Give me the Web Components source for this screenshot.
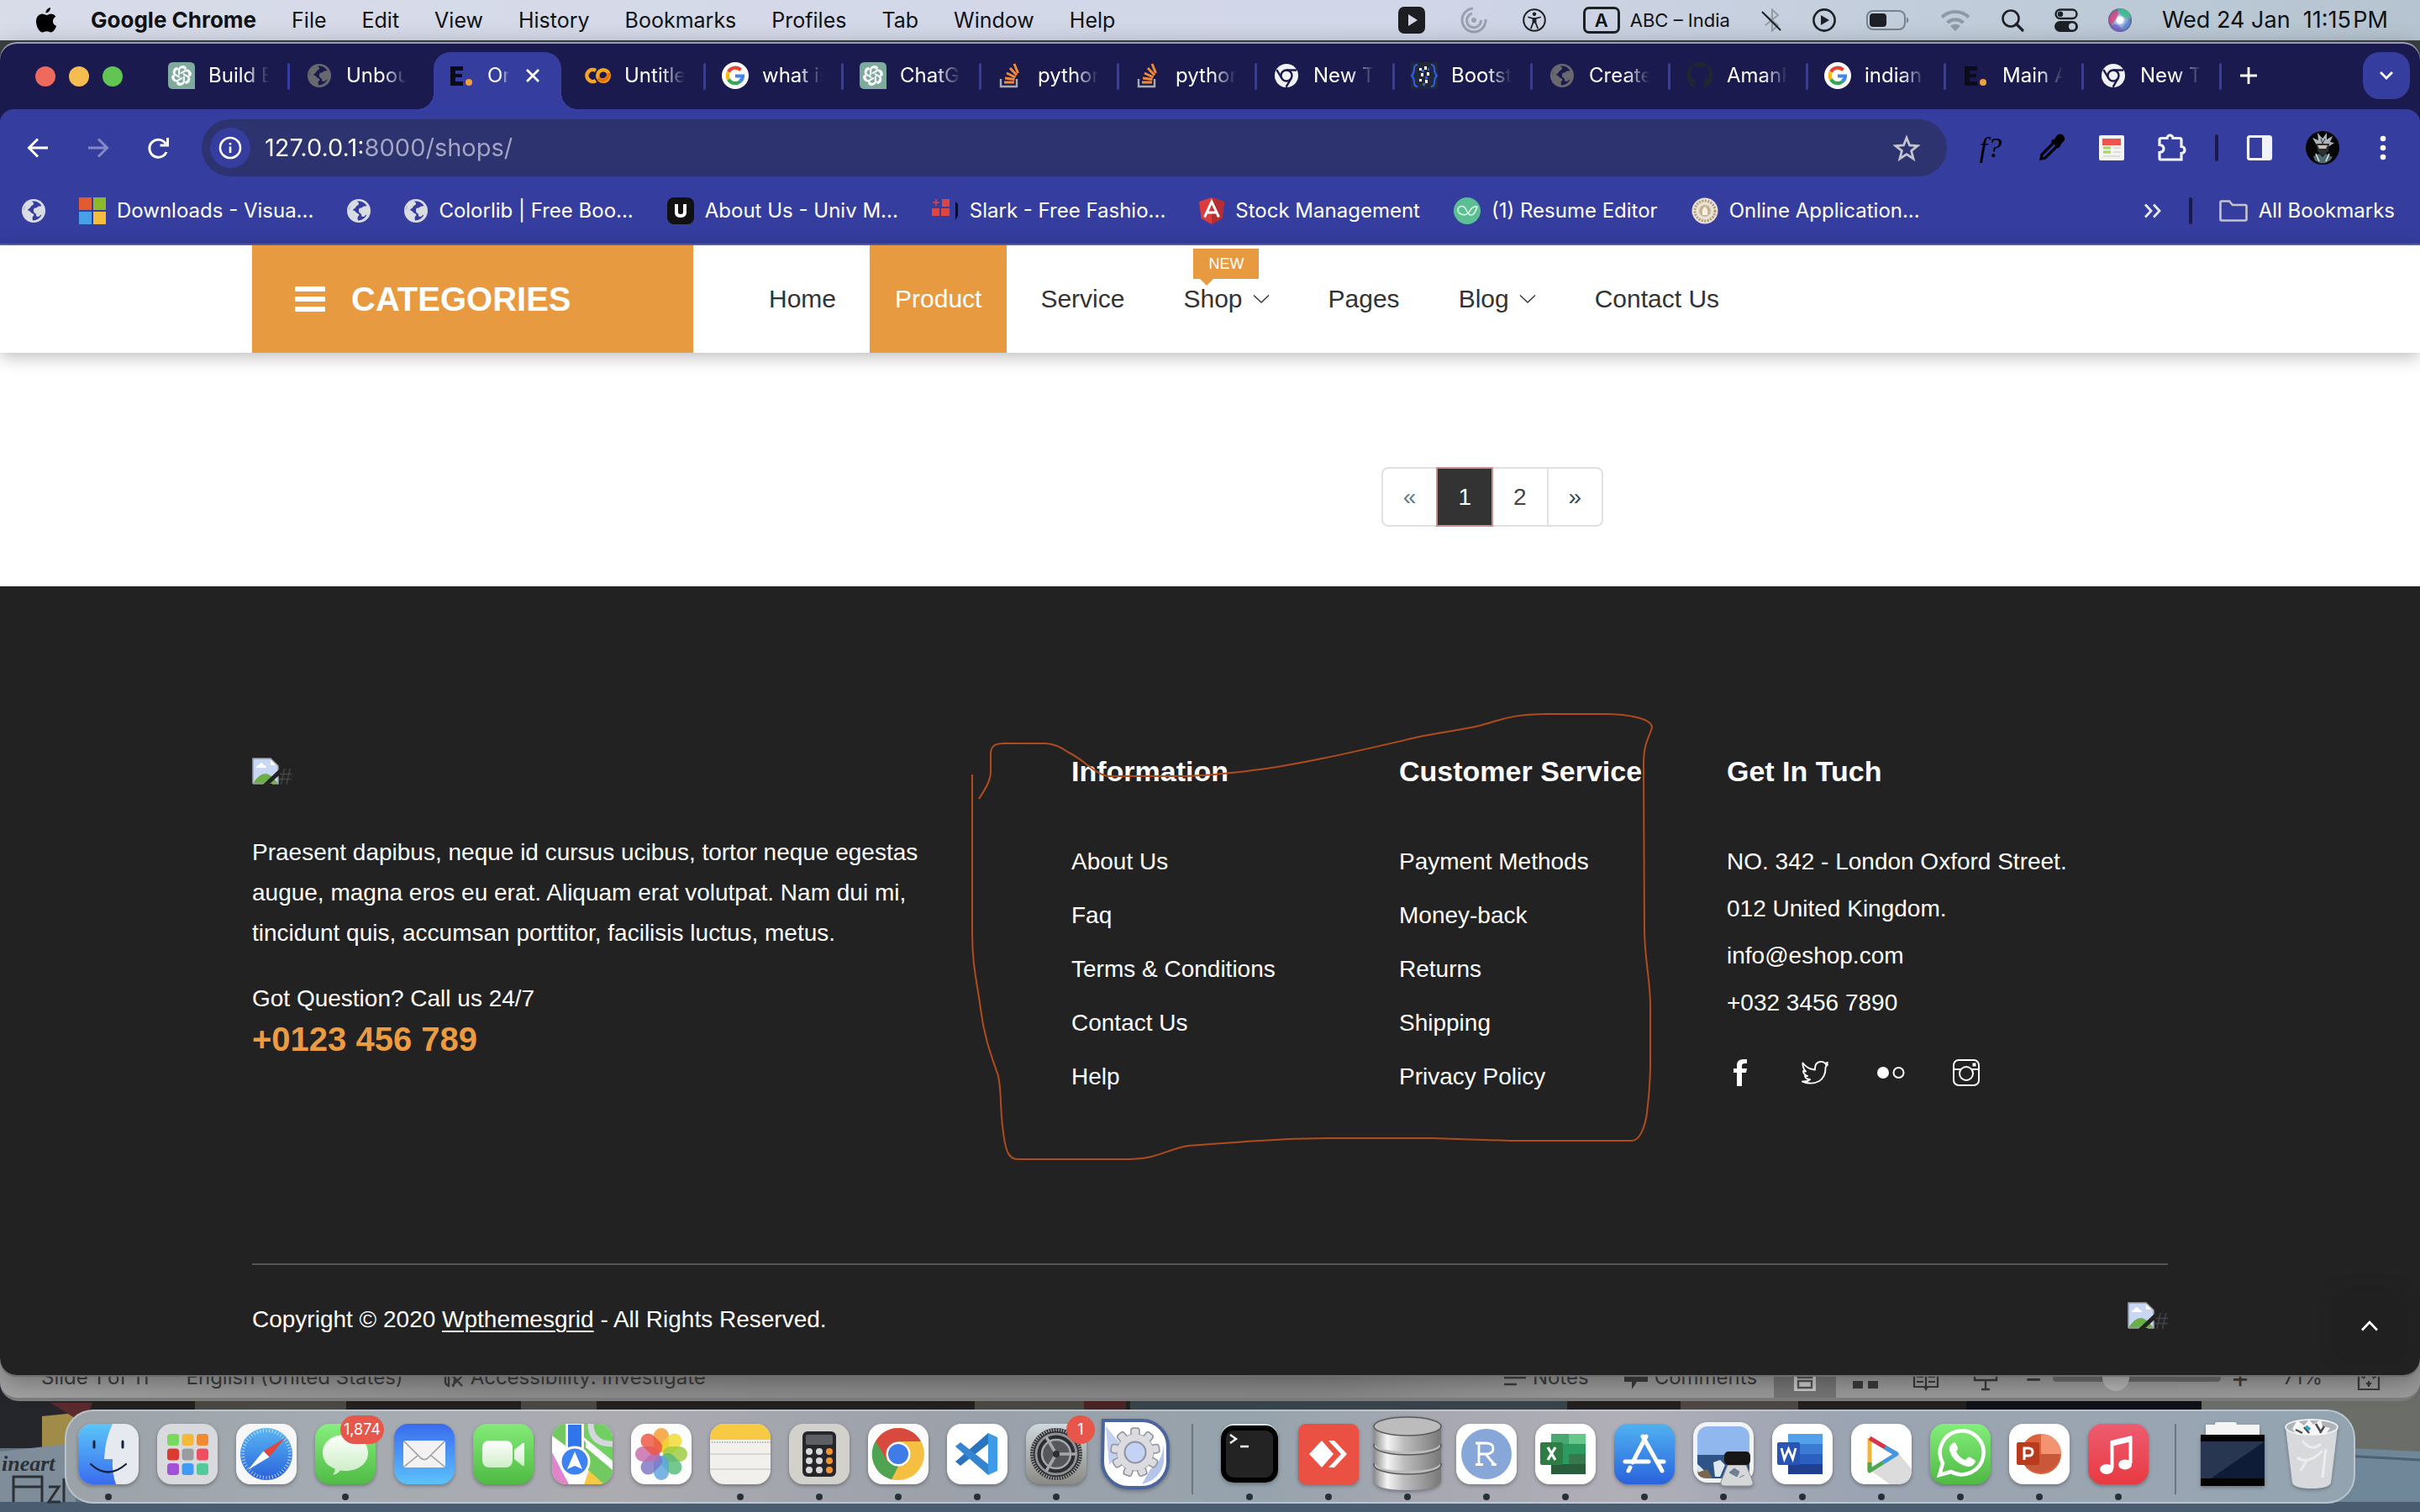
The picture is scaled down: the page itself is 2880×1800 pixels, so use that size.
<!DOCTYPE html>
<html lang="en">
<head>
<meta charset="utf-8">
<title>Eshop</title>
<style>
html,body{margin:0;height:100%}
body{font-family:Inter,"Liberation Sans",sans-serif;overflow:hidden}
</style>
</head>
<body>
<mac-desktop></mac-desktop>
<script>
const define=(name,css,html)=>customElements.define(name,class extends HTMLElement{
  constructor(){
    super();
    const t=document.createElement('template');
    const markup=typeof html==='function'?'':html;
    t.innerHTML=`<style>*{box-sizing:border-box}a{color:inherit;text-decoration:none}button{font:inherit;color:inherit;background:none;border:0;padding:0;margin:0;display:flex;align-items:center;justify-content:center}ul{list-style:none;margin:0;padding:0}${css}</style>${markup}`;
    this.attachShadow({mode:'open'}).append(t.content.cloneNode(true));
  }
  connectedCallback(){
    if(typeof html==='function'&&!this.ready){this.ready=true;this.shadowRoot.innerHTML+=html(this)}
  }
});

const globe='<circle cx="14" cy="14" r="14" fill="currentColor"/><path d="M14 2.500c4 0 7.500 2 9.500 5.500-2 1-4 0-5 1.500s-4 .5-4.500 2.500 3 2 4.500 3 1 3.500 3 4 2-1 2.500-1.500A11.500 11.500 0 0 1 13 25.500c0-2-1-3 0-4.500s2-1.500 1-3-3-1-4-3-3.500-1.500-5-2.500c-1.500-.8-2.500 0-2.500 0C3 7 8 2.500 14 2.500z" fill="var(--cut)"/><path d="M9 2.500c3 0 5 1 5 3s-3 2-3.500 4-3 1.500-3.500 3.500-3 1-4-1C3 8 5 4 9 2.500z" fill="currentColor"/><path d="M15 12c3-1.500 6-1 10-2v7c-3 0-3 4-6 4s-1-3-3-4-3-3-1-5z" fill="currentColor"/>';
const knot='<g fill="none" stroke="#fff" stroke-width="1.700">'+[0,60,120,180,240,300].map(a=>`<path transform="rotate(${a} 16 16)" d="M13 15.500v-6.500a4.500 4.500 0 0 1 8.500-1.500M16 13l5.500-3.200a4.500 4.500 0 0 1 3 7"/>`).join('')+'</g>';
const googleG='<circle cx="16" cy="16" r="16" fill="#fff"/><g fill="none" stroke-width="4.200"><path d="M8 11.500a9 9 0 0 1 14.500-2" stroke="#ea4335"/><path d="M8 20.500a9.500 9.500 0 0 1 0-9" stroke="#fbbc05"/><path d="M8 20.500a9 9 0 0 0 14 2.200" stroke="#34a853"/><path d="M16 16.500h9a9 9 0 0 1-3.200 6.300" stroke="#4285f4"/></g>';
const newtab='<circle cx="14" cy="14" r="14" fill="#f1f3f8"/><circle cx="14" cy="14" r="6.500" fill="none" stroke="#1b1a4e" stroke-width="2.400"/><path d="M14 7.500h12M8.400 17.200l-6-10M19.600 17.200l-6 10.500" stroke="#1b1a4e" stroke-width="2.400" fill="none"/>';
const eicon='<path d="M1 1h15v5H7v4h8v4H7v5h9v5H1z" fill="#0c0c18"/><circle cx="23" cy="20" r="4" fill="#f2a03c"/>';
const overflow='<g fill="none" stroke="#f08a3a" stroke-width="3"><path d="M6 24h12M7 19l11.500 1.500M9 13l10.500 5M13 7l8 8.500M18 2l4.500 11"/></g><path d="M2 20v9h19v-9" fill="none" stroke="#a9abb0" stroke-width="2.400"/>';
const tile=(fill,inner)=>`<rect width="72" height="72" rx="17" fill="${fill}"/>${inner}`;
const grad=(id,a,b)=>`<linearGradient id="${id}" x1="0" y1="0" x2="0" y2="1"><stop offset="0" stop-color="${a}"/><stop offset="1" stop-color="${b}"/></linearGradient>`;
const spokes=(n,r1,r2,c,w)=>Array.from({length:n},(_,i)=>`<path transform="rotate(${i*360/n} 36 36)" d="M36 ${36-r1}V${36-r2}" stroke="${c}" stroke-width="${w}"/>`).join('');
const ICONS={
apple:['0 0 26 32','<path d="M18 1c.3 3-2.500 6.500-5.500 6.500C12.200 4.500 15 1.300 18 1zM18.500 8.500c2.300 0 4.500 1.200 5.800 3.200-5 3-4.200 9.300.8 11.300-1.300 3.500-3.700 7.500-6.300 7.500-2 0-2.700-1.200-5.100-1.200s-3.200 1.200-5.100 1.200C4.800 30.500 1 23.500 1 17.500c0-5.500 3.500-9 7.200-9 2.200 0 4 1.400 5.400 1.400 1.300 0 3-1.400 4.900-1.400z" fill="#000"/>'],
playbox:['0 0 32 32','<rect width="32" height="32" rx="7" fill="#1c1e21"/><path d="M12 9l11 7-11 7z" fill="#d5dae6"/>'],
spiral:['0 0 32 32','<g fill="none" stroke="#9ba1ae" stroke-width="3"><path d="M15 2A14 14 0 1 0 30 15"/><path d="M14 8a8.500 8.500 0 1 0 10.500 8"/></g><circle cx="16" cy="16" r="3" fill="#9ba1ae"/>'],
access:['0 0 28 28','<circle cx="14" cy="14" r="12.800" fill="none" stroke="#1d2126" stroke-width="2"/><circle cx="14" cy="6.800" r="2.200" fill="#1d2126"/><path d="M7 10.500l5 1.300h4l5-1.300M12.500 12v5L10 23.500M15.500 12v5l2.500 6.500" fill="none" stroke="#1d2126" stroke-width="1.800" stroke-linecap="round"/><path d="M12 11.500h4v6h-4z" fill="#1d2126"/>'],
bt:['0 0 26 28','<path d="M6 8l15 12-7 6.500V1.500L21 8 6 20" fill="none" stroke="#929ba6" stroke-width="2"/><path d="M2 4l22 22" stroke="#1d2126" stroke-width="2.200"/>'],
playcirc:['0 0 28 28','<circle cx="14" cy="14" r="12.600" fill="none" stroke="#1d2126" stroke-width="2.600"/><path d="M10 8l10 6-10 6z" fill="#1d2126"/>'],
battery:['0 0 52 24','<rect x="1" y="1" width="45" height="22" rx="7" fill="none" stroke="#78828c" stroke-width="2"/><rect x="4" y="4" width="20" height="16" rx="4" fill="#1d2126"/><path d="M48 8.500c3 1 3 6 0 7z" fill="#78828c"/>'],
wifi:['0 0 36 26','<g fill="none" stroke="#8f9aa5" stroke-width="4.200"><path d="M2 9.500a23 23 0 0 1 32 0"/><path d="M8.500 16a14 14 0 0 1 19 0"/></g><path d="M18 26l-6-6a9 9 0 0 1 12 0z" fill="#8f9aa5"/>'],
search:['0 0 28 28','<circle cx="12" cy="12" r="9.500" fill="none" stroke="#1d2126" stroke-width="2.600"/><path d="M18.500 18.500L26 26" stroke="#1d2126" stroke-width="3.200" stroke-linecap="round"/>'],
cc:['0 0 28 28','<rect x="1.500" y="1.500" width="25" height="10.500" rx="5.200" fill="none" stroke="#1d2126" stroke-width="2.400"/><circle cx="7" cy="6.800" r="3.200" fill="#1d2126"/><rect x="0" y="15" width="28" height="13" rx="6.500" fill="#1d2126"/><circle cx="21" cy="21.500" r="4" fill="#c2cedb"/>'],
siri:['0 0 28 28','<defs><radialGradient id="a"><stop offset="0" stop-color="#fff"/><stop offset=".35" stop-color="#a9c8f5"/><stop offset="1" stop-color="#5a5f8c"/></radialGradient></defs><circle cx="14" cy="14" r="14" fill="url(#a)"/><path d="M1 14C1 7 7 2 12 4c-1 6-3 11-9 15q-2-3-2-5z" fill="#d8487f" opacity=".85"/><path d="M11 1c9-3 16 4 16 11-6 1-12-3-16-11z" fill="#3fbf8f" opacity=".9"/><path d="M4 21c5-4 9-2 13 6-5 2-10 0-13-6z" fill="#7c5ad0" opacity=".7"/><path d="M26 14q0 8-8 12-3-6 8-12z" fill="#5a8fe0" opacity=".8"/><circle cx="14" cy="14" r="4.500" fill="#fff" opacity=".9"/>'],
gpt:['0 0 32 32','<path d="M6 0h20q6 0 6 6v26H6q-6 0-6-6V6q0-6 6-6z" fill="#7fab9e"/>'+knot],
globeD:['0 0 28 28','<g style="color:#68696f;--cut:#1b1a4e">'+globe+'</g>'],
globeL:['0 0 28 28','<g style="color:#dadce4;--cut:#353e9f">'+globe+'</g>'],
eicon:['0 0 28 25',eicon],
colab:['0 0 32 32','<g fill="none" stroke-width="4.500"><path d="M14 10a7 7 0 1 0 0 12" stroke="#f5a623"/><circle cx="23" cy="16" r="6.800" stroke="#f5a623"/><path d="M17 19a7 7 0 0 0 12-6" stroke="#e8710a"/></g>'],
google:['0 0 32 32',googleG],
so:['0 0 28 32',overflow],
newtab:['0 0 28 28',newtab],
boots:['0 0 32 32','<rect width="32" height="32" fill="#20283a"/><path d="M8 3q-4 0-4 5t-3 8q3 3 3 8t4 5M24 3q4 0 4 5t3 8q-3 3-3 8t-4 5" fill="none" stroke="#2f5ef0" stroke-width="2"/><path d="M10 7h3v3h-3zM16 5h3v4h-3zM12 13h3v4h-3zM19 12h3v4h-3zM10 20h3v3h-3zM17 21h3v4h-3z" fill="#fff"/><path d="M13 9h3v3h-3zM17 17h3v3h-3zM14 25h3v3h-3zM20 7h2v3h-2z" fill="#2f5ef0"/>'],
github:['0 0 32 32','<path d="M16 0a16 16 0 0 0-5 31v-5c-4 1-5-2-6-3.500 2 0 2.500 2.500 6 1.500 0-1.500.5-2 1-2.500-5-1-7-3-7-8 0-2 .6-3.500 1.700-4.700C6 7 6.200 5.500 7 4.500c2 0 3.500 1 4.700 1.700a16 16 0 0 1 8.600 0C21.500 5.500 23 4.500 25 4.500c.8 1 1 2.500.3 4.300C26.400 10 27 11.500 27 13.500c0 5-2 7-7 8 1 1 1 2 1 3V31A16 16 0 0 0 16 0z" fill="#22272e"/>'],
back:['0 0 26 24','<path d="M13 1.500L2.500 12 13 22.500M3 12h22" fill="none" stroke="currentColor" stroke-width="3"/>'],
fwd:['0 0 26 24','<path d="M13 1.500L23.500 12 13 22.500M23 12H1" fill="none" stroke="currentColor" stroke-width="3"/>'],
reload:['0 0 26 26','<path d="M22 18a10.500 10.500 0 1 1-.5-9.500" fill="none" stroke="#fff" stroke-width="3"/><path d="M25 1v10.500H14.500v-3H22V1z" fill="#fff"/>'],
info:['0 0 28 28','<circle cx="14" cy="14" r="12" fill="none" stroke="#fff" stroke-width="2.600"/><path d="M14 12.500V20M14 8v2.600" stroke="#fff" stroke-width="2.600"/>'],
star:['0 0 34 32','<path d="M17 4l3.500 9 9.500.6-7.400 6 2.500 9.400L17 23.700 8.900 29l2.500-9.400-7.400-6 9.500-.6z" fill="none" stroke="#c3c4cf" stroke-width="2.800"/>'],
dropper:['0 0 32 32','<path d="M22 1a5 5 0 0 1 8 1q3 4-1 7l-4 5-7-7z" fill="#000"/><path d="M16 7l9 8" stroke="#000" stroke-width="4"/><path d="M18 10L4 24l-1 5 5-1 14-14" fill="none" stroke="#000" stroke-width="3.200"/>'],
card:['0 0 30 30','<rect width="30" height="30" rx="2" fill="#f3f3ef"/><rect x="4" y="4" width="22" height="8" fill="#ef5350"/><path d="M5 15h9M5 20h9" stroke="#a4d65e" stroke-width="3"/><path d="M17 15h9M17 20h9M5 25h20" stroke="#ddd" stroke-width="2"/>'],
puzzle:['0 0 34 34','<path d="M11 5.500a3.500 3.500 0 0 1 7 0h8q2 0 2 2v8a4 4 0 0 1 0 8v7.500H3q-1 0-1-2v-6.500q5-.5 5-4.500t-5-4.500V7.500q0-2 2-2z" fill="none" stroke="#f1f3fa" stroke-width="3.200"/>'],
panel:['0 0 30 30','<rect x="1.500" y="1.500" width="27" height="27" rx="2" fill="none" stroke="#f1f3fa" stroke-width="3.200"/><path d="M18 2h10v26H18z" fill="#f1f3fa"/>'],
avatar:['0 0 40 40','<circle cx="20" cy="20" r="20" fill="#060606"/><path d="M12 15L8 8l7 3-1-9 6 7 5-7 0 8 7-4-3 7 5 1-6 4H14z" fill="#aeb2ba"/><path d="M13 15h15l-1 9-7 6-6-6z" fill="#2c2f34"/><path d="M14 17h12l-2 4h-8z" fill="#cdbfb2"/><path d="M9 30l7-3 4 4 4-4 8 4-3 4q-9 7-18 0z" fill="#4f6b70"/><path d="M18 9l2 6 3-6" stroke="#333" fill="none"/><path d="M12 27l4 9M28 27l-4 9" stroke="#dfe8e8" stroke-width="1.500" fill="none"/>'],
dots:['0 0 8 30','<circle cx="4" cy="4" r="3.300" fill="#fff"/><circle cx="4" cy="15" r="3.300" fill="#fff"/><circle cx="4" cy="26" r="3.300" fill="#fff"/>'],
ms:['0 0 32 32','<path d="M0 0h15v15H0z" fill="#e25a2f"/><path d="M17 0h15v15H17z" fill="#8cb82b"/><path d="M0 17h15v15H0z" fill="#48a0e8"/><path d="M17 17h15v15H17z" fill="#f6bd3d"/>'],
univ:['0 0 32 32','<rect width="32" height="32" rx="8" fill="#111"/><path d="M11 8v9.500q0 4.500 5 4.500t5-4.500V8" fill="none" stroke="#fff" stroke-width="4"/>'],
slark:['0 0 32 32','<path d="M12 2h9v9h-9zM0 13h9v9H0zM11 13h10v9H11z" fill="#e0443e"/><path d="M5 2v8M1 6h8" stroke="#e0443e" stroke-width="1.600"/><path d="M28 5l3 3v14l-3 5z" fill="#0a0a14"/>'],
angular:['0 0 30 32','<path d="M15 0l15 5-2.500 20L15 32 2.500 25 0 5z" fill="#dd3b3a"/><path d="M15 0l15 5-2.500 20L15 32z" fill="#b52e31"/><path d="M6.500 23.500L15 5l8.500 18.500M9.500 18h11" fill="none" stroke="#fff" stroke-width="3"/>'],
resume:['0 0 32 32','<circle cx="16" cy="16" r="16" fill="#5cbf93"/><path d="M28 11q-5-1-8 4t-6 5.500q-3 .5-5-.5-4-1.500-4-5t4-4.500q4-.5 6 4.500t5 6q3 .5 5-3t3-7z" fill="none" stroke="#d8f5e6" stroke-width="1.600"/>'],
seal:['0 0 32 32','<circle cx="16" cy="16" r="15.500" fill="#e9e2d6"/><circle cx="16" cy="16" r="12" fill="none" stroke="#b29a77" stroke-width="3" stroke-dasharray="2 1.500"/><circle cx="16" cy="16" r="7" fill="#c8b391"/><path d="M13 21q-1-8 3-10 4 2 3 10z" fill="#f7f2e8"/>'],
more:['0 0 22 18','<path d="M2 1.500L9 9l-7 7.500M12 1.500L19 9l-7 7.500" fill="none" stroke="#e8e9f2" stroke-width="2.800"/>'],
folder:['0 0 34 26','<path d="M1.500 3q0-1.500 1.500-1.500h9l4 4.500h15q1.500 0 1.500 1.500V23q0 1.500-1.500 1.500H3q-1.500 0-1.500-1.500z" fill="none" stroke="#c6c4c9" stroke-width="2.600"/>'],
plus:['0 0 22 22','<path d="M11 1v20M1 11h20" stroke="#fff" stroke-width="2.800"/>'],
cross:['0 0 18 18','<path d="M2 2l14 14M16 2L2 16" stroke="#fff" stroke-width="2.800"/>'],
caret:['0 0 18 12','<path d="M2 2l7 7 7-7" fill="none" stroke="#fff" stroke-width="2.800"/>'],
burger:['0 0 38 32','<rect x="1" y="1" width="36" height="6" rx="1" fill="#fff"/><rect x="1" y="13" width="36" height="6" rx="1" fill="#fff"/><rect x="1" y="25" width="36" height="6" rx="1" fill="#fff"/>'],
chev:['0 0 20 12','<path d="M1 1.500l9 8.500 9-8.500" fill="none" stroke="#333" stroke-width="1.400"/>'],
up:['0 0 22 14','<path d="M2 12.500L11 3l9 9.500" fill="none" stroke="#fff" stroke-width="2.600"/>'],
broken:['0 0 32 32','<path d="M1 1h21l9 9v21H1z" fill="#c9d7f5"/><path d="M1 31q7-12 15-12 6 0 15 12z" fill="#6cae48"/><path d="M5 12q0-3 3-3 3-6 6 0 3 0 3 3z" fill="#fff"/><path d="M22 1v8h9z" fill="#fff"/><path d="M1 31V1h21l9 9v6" fill="none" stroke="#9aa0a8" stroke-width="1.600"/><path d="M1 31h13M24 31h7v-9" fill="none" stroke="#9aa0a8" stroke-width="1.600"/><path d="M32 14v7L20 32h-7z" fill="#222"/>'],
fb:['0 0 32 32','<path d="M12 32V16H8v-5h4V7q0-7 8-7h4v5h-3q-3 0-3 3v3h6l-1 5h-5v16z" fill="#fff"/>'],
tw:['0 0 32 32','<path d="M1.500 4.500q6 7.500 14.500 8Q15.500 4 22 3q4-.5 6 2l3-1-2 3 2-.5-2.500 3Q29 21 21 26q-9 5-20 .5 6 .5 9-2.500-5 0-6-4h3q-5-2-5-6l3 .500q-4-4-3.500-10z" fill="none" stroke="#fff" stroke-width="1.900" stroke-linejoin="round"/>'],
flickr:['0 0 34 32','<circle cx="8" cy="16" r="7" fill="#fff"/><circle cx="26.500" cy="16" r="6" fill="none" stroke="#fff" stroke-width="2"/>'],
insta:['0 0 32 32','<rect x="1" y="1" width="30" height="30" rx="6" fill="none" stroke="#fff" stroke-width="2"/><circle cx="16" cy="17" r="8" fill="none" stroke="#fff" stroke-width="2"/><path d="M1 12h8M23 12h8" stroke="#fff" stroke-width="2"/><path d="M23.500 4.500h4v4h-4z" fill="#fff"/>'],
notesi:['0 0 26 26','<path d="M0 5h26M0 13h26M0 21h15" stroke="#3b3b3b" stroke-width="2.600"/>'],
comi:['0 0 28 30','<path d="M0 3h28v17H15l-6 9v-9H0z" fill="#3b3b3b"/>'],
acci:['0 0 28 28','<path d="M2 12q5-2 4 4t4 8V12M13 12q5 0 4 7l-2 6M14 24l12-12M15 12l11 12" fill="none" stroke="#3f3f3f" stroke-width="2.400"/>'],
v1:['0 0 28 34','<path d="M1 1h26v32H1z" fill="#c9c9c9"/><path d="M6 4h16v13H6zM6 21h16v8H6z" fill="#c9c9c9" stroke="#555" stroke-width="2.400"/>'],
v2:['0 0 30 32','<path d="M0 2h12v9H0zM18 2h12v9H18zM0 20h12v9H0zM18 20h12v9H18z" fill="#3b3b3b"/>'],
v3:['0 0 30 34','<path d="M1 4h12l2 2 2-2h12v24H17l-2 3-2-3H1zM15 6v24M4 10h8M4 16h8M4 22h8M18 10h8M18 16h8M18 22h8" fill="none" stroke="#3b3b3b" stroke-width="2.200"/>'],
v4:['0 0 28 34','<path d="M1 4h26v16H1zM14 20v10M9 31h10" fill="none" stroke="#3b3b3b" stroke-width="2.400"/>'],
fit:['0 0 26 34','<path d="M1 3h24v28H1zM13 6v7M13 21v7M4 16h5M17 16h5" fill="none" stroke="#3b3b3b" stroke-width="2.200"/><path d="M9 23h8l-4 5zM4 16l4-3v6zM22 16l-4-3v6z" fill="#3b3b3b"/>'],
finder:['0 0 72 72',`<defs>${grad('a','#5ac5f8','#3a6cf0')}<clipPath id="c"><rect width="72" height="72" rx="17"/></clipPath></defs><g clip-path="url(#c)"><rect width="72" height="72" fill="#e6e9f0"/><path d="M0 0h41Q32 18 31 42h10q-1 16 4 30H0z" fill="url(#a)"/></g><path d="M19 21v7M53 21v7" stroke="#16213a" stroke-width="3" stroke-linecap="round"/><path d="M15 48q20 19 42 0" fill="none" stroke="#16213a" stroke-width="2.200" stroke-linecap="round"/>`],
launch:['0 0 72 72',tile('#d8dadd',['#79d85e','#f5b93a','#ee8b30','#dd3b31','#9a9ca2','#ee4e5e','#a251d8','#3f9bf5','#54c99a'].map((c,i)=>`<rect x="${12+i%3*17.500}" y="${12+(i/3|0)*17.500}" width="14" height="14" rx="3.500" fill="${c}"/>`).join(''))],
safari:['0 0 72 72',`<defs>${grad('a','#58b6f3','#2a62dc')}</defs>`+tile('#f7f7f7',`<circle cx="36" cy="36" r="31" fill="url(#a)"/>${spokes(48,30,26,'#dcecff',.8)}<path d="M58 17L39.500 39.500l-7-7z" fill="#e5453b"/><path d="M14 55l18.500-22.500 7 7z" fill="#fff"/>`)],
messages:['0 0 72 72',`<defs>${grad('a','#86ef7d','#50bb45')}${grad('b','#fdfffd','#c9ecc3')}</defs>`+tile('url(#a)','<path d="M36 13c16 0 27 9 27 21.500S52 56 36 56q-3 0-6-.5-4 5-9 5 3-3 2.500-7C14 50 9 43 9 34.500 9 22 20 13 36 13z" fill="url(#b)"/>')],
mail:['0 0 72 72',`<defs>${grad('a','#3a6bee','#5cc2fa')}</defs>`+tile('url(#a)','<rect x="11" y="20" width="50" height="32" rx="3" fill="#f2f2f3"/><path d="M12 21l20 20q4 3 8 0l20-20M12 51l17-14M60 51L43 37" fill="none" stroke="#9d9da2" stroke-width="1.600"/>')],
facetime:['0 0 72 72',`<defs>${grad('a','#84ea78','#4fbb43')}${grad('b','#fff','#cdeec7')}</defs>`+tile('url(#a)','<rect x="11" y="20" width="36" height="32" rx="8" fill="url(#b)"/><path d="M49 31l10-8q2-1 2 2v23q0 3-2 2l-10-8z" fill="url(#b)"/>')],
maps:['0 0 72 72','<defs><clipPath id="c"><rect width="72" height="72" rx="17"/></clipPath></defs><g clip-path="url(#c)"><rect width="72" height="72" fill="#f3f3f3"/><path d="M0 0h16v26L0 14z" fill="#72c95f"/><path d="M38 0h34v44L38 16z" fill="#72cf62"/><path d="M46 0q0 24 26 24" fill="none" stroke="#d5d6dd" stroke-width="7"/><path d="M38 20l34 32v20H58L38 50z" fill="#72c95f"/><path d="M0 32l22 40H0z" fill="#e184c9"/><path d="M0 16l18 12v10L40 54v18H20L0 34z" fill="#fff"/><path d="M40 20l32 28v7L40 28z" fill="#fff"/><path d="M44 56l18 16H38z" fill="#f6c944"/><path d="M18 0h18v40H18z" fill="#2f76ea" stroke="#fff" stroke-width="2"/></g><circle cx="27" cy="45" r="17" fill="#3c82f2" stroke="#fff" stroke-width="3"/><path d="M27 33l9 21-9-4-9 4z" fill="#fff"/>'],
photos:['0 0 72 72',tile('#fdfdfd',['#f39a2c','#f0d92e','#9bcb3c','#58b978','#5aa5df','#7d75c4','#c56aa9','#ec5440'].map((c,i)=>`<rect transform="rotate(${i*45} 36 36)" x="27" y="5" width="18" height="29" rx="9" fill="${c}" opacity=".82"/>`).join(''))],
notes:['0 0 72 72','<defs><clipPath id="c"><rect width="72" height="72" rx="17"/></clipPath></defs><g clip-path="url(#c)"><rect width="72" height="72" fill="#f1f0ec"/><rect width="72" height="19" fill="#f8ca43"/><path d="M0 36h72M0 54h72" stroke="#cfcec8" stroke-width="1.500"/><path d="M2 22h70" stroke="#a9a59a" stroke-width="1.500" stroke-dasharray="1.500 1.500"/></g>'],
calc:['0 0 72 72',tile('#d2d1cc','<rect x="16" y="9" width="40" height="54" rx="6" fill="#26272b"/><rect x="20" y="13" width="32" height="12" rx="2" fill="#5d5f64"/>'+[0,1,2].map(r=>[0,1,2].map(k=>`<circle cx="${24+k*12}" cy="${33+r*11}" r="4" fill="${k==2?'#f09433':'#d9d9d9'}"/>`).join('')).join(''))],
chrome:['0 0 72 72',tile('#fcfcfc','<circle cx="36" cy="36" r="31" fill="#f5bf42"/><path d="M36 5A31 31 0 0 1 63 21H36L22 44 9 21A31 31 0 0 1 36 5z" fill="#d84a3d"/><path d="M9 20.500l13.500 23L36 51l-7 15.500A31 31 0 0 1 9 20.500z" fill="#4fa452"/><path d="M36 67l13-23-13 7-8 15q4 1 8 1z" fill="#f5bf42"/><circle cx="36" cy="36" r="14.500" fill="#fff"/><circle cx="36" cy="36" r="12" fill="#3f7ce8"/>')],
vscode:['0 0 72 72',tile('#fff','<path d="M49 11l11 5v40l-11 5z" fill="#3e9be8"/><path d="M49 11v13L16 50l-6-5z" fill="#2a73c0"/><path d="M49 61V48L16 22l-6 5z" fill="#3484d0"/>')],
settings:['0 0 72 72',`<defs>${grad('a','#cfd8dd','#8c8a85')}</defs>`+tile('url(#a)',`<circle cx="36" cy="36" r="31" fill="#2c2d30"/>${spokes(60,31,27,'#a3a5a8',1.4)}<circle cx="36" cy="36" r="24" fill="none" stroke="#8f9194" stroke-width="3"/><circle cx="36" cy="36" r="17" fill="#55575b"/><circle cx="36" cy="36" r="17" fill="none" stroke="#a5a7aa" stroke-width="2.500"/><path d="M36 36H60M36 36L24 15.500M36 36L24 56.500" stroke="#a5a7aa" stroke-width="3.500"/><circle cx="36" cy="36" r="4" fill="#2c2d30"/>`)],
gear:['0 0 84 84','<path d="M4 2h46a31 31 0 0 1 31 31v18a31 31 0 0 1-31 31H34A31 31 0 0 1 3 51z" fill="#fff" stroke="#4b659c" stroke-width="4"/><path d="M7 9l22 26-18 20z" fill="#c3cfee"/><path d="M60 60q14-8 16-30v22q-4 20-26 26z" fill="#b5c5ea"/>'+Array.from({length:9},(_,i)=>`<rect transform="rotate(${i*40} 42 40)" x="37" y="11" width="10" height="12" rx="3" fill="#dcdce0" stroke="#8f919c" stroke-width="1.500"/>`).join('')+'<circle cx="42" cy="40" r="22" fill="#dcdce0" stroke="#a1a3ad"/>'+Array.from({length:9},(_,i)=>`<rect transform="rotate(${i*40} 42 40)" x="38.500" y="14" width="7" height="12" fill="#dcdce0"/>`).join('')+'<circle cx="42" cy="40" r="12.500" fill="#c3d2f5" stroke="#8f919c" stroke-width="2"/>'],
terminal:['0 0 72 72','<rect x="2" y="0" width="68" height="70" rx="16" fill="#d8eaf0"/><rect x="2" y="2" width="68" height="68" rx="15" fill="#000"/><rect x="8" y="8" width="56" height="56" rx="9" fill="#232323"/><path d="M13 13l7 5-7 5M25 27h10" fill="none" stroke="#fff" stroke-width="2.400"/>'],
anydesk:['0 0 72 72','<rect width="72" height="72" rx="9" fill="#ea5143"/><path d="M13 36l15-16 14 16-14 16z" fill="#fff"/><path d="M36 20h7l15 16-15 16h-7l15-16z" fill="#fff"/>'],
db:['0 0 84 90','<defs><linearGradient id="a"><stop offset="0" stop-color="#8b8b8b"/><stop offset=".2" stop-color="#f5f5f5"/><stop offset=".45" stop-color="#bdbdbd"/><stop offset="1" stop-color="#777"/></linearGradient></defs>'+[58,35,12].map(y=>`<path d="M2 ${y}v18q0 12 40 12t40-12V${y}z" fill="url(#a)"/><ellipse cx="42" cy="${y}" rx="40" ry="11" fill="#bcbcbc" stroke="#5b5b5b" stroke-width="1.600"/>`).join('')],
rstudio:['0 0 72 72',tile('#fff','<circle cx="36" cy="36" r="30" fill="#86a7d8"/><path d="M27 48V23h8q9 0 9 6.500T35 36h-8M35 36l10 12M23 23h5M23 48.500h9M42 48.500h6" fill="none" stroke="#fff" stroke-width="2.800"/>')],
excel:['0 0 72 72',tile('#fff','<rect x="19" y="12" width="41" height="48" rx="2" fill="#2e9a5f"/><path d="M40 12h20v12H40z" fill="#66c68c"/><path d="M19 12h21v12H19z" fill="#4aa772"/><path d="M40 36h20v12H40z" fill="#37784c"/><path d="M19 48h41v12H19z" fill="#2a5d3c"/><rect x="6" y="22" width="27" height="27" rx="2" fill="#2f7d45"/><path d="M15 28l9 15M24 28l-9 15" stroke="#fff" stroke-width="3.200"/>')],
appstore:['0 0 72 72',`<defs>${grad('a','#4fb2f0','#2a62dd')}</defs>`+tile('url(#a)','<g stroke="#fff" stroke-width="5" stroke-linecap="round"><path d="M38 15L22 46M34 15l23 41M13 45h28M51 45h8M19 52l-2 4"/></g>')],
preview:['0 0 72 76','<rect width="72" height="72" rx="17" fill="#f2f3f5"/><rect x="5" y="5" width="62" height="62" rx="12" fill="#91b8ee"/><path d="M5 39h62v16q0 12-12 12H17Q5 67 5 55z" fill="#2e5487"/><path d="M5 50q10 8 14 17h-3Q5 66 5 54zM24 48l8-3 6 6-6 14h-6z" fill="#dfe8ef"/><path d="M5 60l12-4 6 11H16q-10-1-11-7z" fill="#7a6650"/><path d="M41 51h22l8 20q1 5-5 5H38q-6 0-5-5z" fill="#d5d7d8" stroke="#8b8f92"/><rect x="37" y="35" width="31" height="16" rx="5" fill="#161616"/><path d="M43 60l6-5 6 4-3 6zM55 66l6-3" fill="#6d7f90" stroke="#6d7f90"/>'],
word:['0 0 72 72',tile('#fff','<rect x="19" y="12" width="41" height="48" rx="2" fill="#2b5fc0"/><path d="M19 12h41v12H19z" fill="#55a0ea"/><path d="M19 24h41v12H19z" fill="#3c7bd4"/><path d="M19 48h41v12H19z" fill="#203f8e"/><rect x="6" y="22" width="27" height="27" rx="2" fill="#2754b5"/><path d="M11 29l3.500 13 5-12 5 12L28 29" fill="none" stroke="#fff" stroke-width="2.800"/>')],
play:['0 0 72 72',tile('#fff','<path d="M54 32l18 22v1q0 17-17 17H46L24 56z" fill="#dcdcdc"/><path d="M22 17l32 19-32 20z" fill="#fff"/><g fill="none" stroke-width="5" stroke-linejoin="round"><path d="M22 17v38" stroke="#f0b43a"/><path d="M22 17l32 19" stroke="#d6364a"/><path d="M40 28l14 8-16 10" stroke="#4498e0"/><path d="M38 46L22 56V46" stroke="#4fa84f"/></g>')],
whatsapp:['0 0 72 72',`<defs>${grad('a','#83ee79','#4fb944')}</defs>`+tile('url(#a)','<path d="M11 61l4-14a26 26 0 1 1 10 10z" fill="none" stroke="#fff" stroke-width="4.500"/><path d="M27 23q3-2 4 1l2 5q0 2-2 4 4 8 11 10l3-3q1-1 3 0l5 3q2 1 0 4-4 6-12 3-14-5-18-18-1-6 4-9z" fill="#fff"/>')],
ppt:['0 0 72 72',tile('#fff','<circle cx="38" cy="36" r="24" fill="#d9623c"/><path d="M38 12a24 24 0 0 1 24 24H38z" fill="#f29472"/><path d="M15 43a24 24 0 0 0 46-7H38z" fill="#c9573a"/><rect x="9" y="22" width="27" height="27" rx="2" fill="#b93b1e"/><path d="M18 43V29h5q5 0 5 4.500T23 38h-5" fill="none" stroke="#fff" stroke-width="3"/>')],
music:['0 0 72 72',`<defs>${grad('a','#ee5c70','#e83a42')}</defs>`+tile('url(#a)','<path d="M27 20l25-6v7l-25 6z" fill="#fff"/><path d="M28.500 20v33M50.500 15v32" stroke="#fff" stroke-width="4"/><ellipse cx="22" cy="54" rx="8" ry="6" fill="#fff"/><ellipse cx="44" cy="48.500" rx="8" ry="6" fill="#fff"/>')],
stack:['0 0 76 76','<path d="M17 2q0-2 3-2h20q3 0 3 3h27v14H6V3h11z" fill="#f4f4f4"/><rect x="0" y="15" width="76" height="61" fill="#0f1c38"/><path d="M0 15h76v8H0zM0 67h76v9H0z" fill="#050506"/><path d="M0 23h76L12 67H0z" fill="#33415c" opacity=".7"/>'],
trash:['0 0 66 84','<path d="M2 10l8 66q2 7 23 7t23-7l8-66z" fill="#dfe1e3" opacity=".92"/><ellipse cx="33" cy="10" rx="31" ry="9" fill="#aeb4b8" stroke="#eceef0" stroke-width="2"/><path d="M10 12l6-10 8 6 6-7 5 6 9-6 2 8 9 2-6 8H16z" fill="#f7f7f7"/><path d="M14 13l8 4M24 10l6 7M38 6l6 10M48 9l-5 8" stroke="#4b4b4b" stroke-width="2.500"/><path d="M26 9l5 4" stroke="#3aa0d0" stroke-width="4"/><path d="M22 26q10 14 22 4M16 46q12 10 30-8M20 62l8-14M46 70l4-34" stroke="#eceded" stroke-width="3" fill="none"/>']
};

define('ui-icon',':host{display:block;flex:none}svg{display:block}',el=>{
  const [box,body]=ICONS[el.getAttribute('name')];
  const p=box.split(' ');
  return `<svg viewBox="${box}" width="${p[2]}" height="${p[3]}" overflow="visible" aria-hidden="true">${body}</svg>`;
});
const ic=n=>`<ui-icon name="${n}"></ui-icon>`;

/* menu bar */
define('mac-menubar',`
:host{display:flex;align-items:center;height:48px;flex:none;padding:0 38px 0 42px;justify-content:space-between;background:linear-gradient(90deg,#d8dce9,#d1d6e8 58%,#c3cedc 78%,#b5c4d0);color:#101214;font-size:25px;line-height:32px;position:relative}
nav,div{display:flex;align-items:center}
nav{gap:42px}nav b{font-weight:700;font-size:26px;margin-left:-2px}
div{gap:36px}
.apps{gap:42px;margin-right:8px}
.src{gap:12px;font-size:22px}
.key{width:44px;height:32px;border:3px solid #1d2126;border-radius:7px;display:flex;align-items:center;justify-content:center;font-size:22px;font-weight:600;line-height:24px}
time{white-space:pre;font-size:27px}`,
`<nav>${ic('apple')}<b>Google Chrome</b>${['File','Edit','View','History','Bookmarks','Profiles','Tab','Window','Help'].map(t=>`<span>${t}</span>`).join('')}</nav>
<div><div class="apps">${ic('playbox')}${ic('spiral')}${ic('access')}</div><div class="src"><span class="key">A</span><span>ABC – India</span></div>${ic('bt')}${ic('playcirc')}${ic('battery')}${ic('wifi')}${ic('search')}${ic('cc')}${ic('siri')}<time>Wed 24 Jan  11:15&#8202;PM</time></div>`);

/* browser tab */
define('browser-tab',`
:host{display:block;flex:none;width:164px;height:68px;position:relative;color:#fff}
:host([active]){width:167px}
.t{display:flex;align-items:center;height:56px;padding-left:20px;gap:16px}
.i{width:32px;display:flex;justify-content:center}
.n{flex:none;width:72px;overflow:hidden;white-space:nowrap;-webkit-mask:linear-gradient(90deg,#000 60%,transparent);mask:linear-gradient(90deg,#000 60%,transparent)}
:host(:not([active]):not([last]))::after{content:"";position:absolute;right:-1px;top:13px;width:3px;height:32px;border-radius:2px;background:#353e9f}
:host([active]) .t{margin:0 7px 0 8px;padding-left:16px;height:68px;padding-bottom:12px;background:#353e9f;border-radius:20px 20px 0 0}
:host([active]) .i{width:34px}
:host([active]) .n{width:26px}
:host([active]) .t{gap:14px}
button{margin-left:5px}
.f{position:absolute;bottom:0;width:20px;height:20px;display:none}
:host([active]) .f{display:block}
.l{left:-12px;background:radial-gradient(circle at 0 0,transparent 20px,#353e9f 20px)}
.r{right:-13px;background:radial-gradient(circle at 100% 0,transparent 20px,#353e9f 20px)}`,
el=>`<div class="t"><span class="i">${ic(el.getAttribute('icon'))}</span><span class="n"><slot></slot></span>${el.hasAttribute('active')?`<button aria-label="Close tab">${ic('cross')}</button>`:''}</div><i class="f l"></i><i class="f r"></i>`);

const TABS=[['gpt','Build E'],['globeD','Unbou'],['eicon','Or'],['colab','Untitle'],['google','what is'],['gpt','ChatG'],['so','python'],['so','python'],['newtab','New Ta'],['boots','Bootst'],['globeD','Create'],['github','AmanK'],['google','indian'],['eicon','Main A'],['newtab','New Ta']];
define('browser-tabstrip',`
:host{display:flex;height:78px;padding:10px 12px 0 42px;flex:none;font-size:24px;line-height:32px}
.lights{display:flex;gap:16px;width:138px;height:58px;align-items:center;flex:none}
.lights i{width:24px;height:24px;border-radius:50%}
.tabs{display:flex;flex:1;min-width:0}
.plus{width:60px;height:56px;margin-left:3px}
.drop{width:56px;height:56px;border-radius:20px;background:#353e9f;flex:none}`,
`<div class="lights"><i style="background:#ee6a5f"></i><i style="background:#f5bd4f"></i><i style="background:#61c554"></i></div>
<div class="tabs">${TABS.map(([i,t],k)=>`<browser-tab icon="${i}"${k==2?' active':''}${k==1?' last':''}>${t}</browser-tab>`).join('')}<button class="plus" aria-label="New tab">${ic('plus')}</button></div>
<button class="drop" aria-label="Search tabs">${ic('caret')}</button>`);

/* address bar */
define('browser-toolbar',`
:host{display:flex;align-items:center;height:92px;padding:0 40px 0 32px;color:#fff}
.nav{display:flex;gap:46px;width:208px;flex:none}
.fwd{color:#8589c6}
.omni{flex:1;display:flex;align-items:center;height:68px;border-radius:34px;background:#2d336f;padding:0 31px 0 10px}
.info{width:48px;height:48px;border-radius:50%;background:#353e9f;flex:none}
input{flex:1;min-width:0;border:0;outline:0;padding:0;margin:0 17px;height:44px;font:29px/44px Inter,sans-serif;color:transparent;background:linear-gradient(90deg,#fff 116px,#a4a6c2 116px);-webkit-background-clip:text;background-clip:text}
.ext{display:flex;align-items:center;gap:40px;margin-left:35px;flex:none}
.ext button:first-child{font:italic 34px/40px "Liberation Serif",serif;color:#000;width:34px}
.ext button:last-child{margin-left:8px}
.ext i{width:4px;height:32px;border-radius:2px;background:#1b1a4e;margin:0 -6px}`,
`<div class="nav"><button aria-label="Back">${ic('back')}</button><button class="fwd" aria-label="Forward">${ic('fwd')}</button><button aria-label="Reload">${ic('reload')}</button></div>
<div class="omni"><button class="info" aria-label="Site information">${ic('info')}</button><input aria-label="Address" value="127.0.0.1:8000/shops/"><button aria-label="Bookmark this page">${ic('star')}</button></div>
<div class="ext"><button aria-label="Font finder">f?</button><button aria-label="Colour picker">${ic('dropper')}</button><button aria-label="Notes card">${ic('card')}</button><button aria-label="Extensions">${ic('puzzle')}</button><i></i><button aria-label="Side panel">${ic('panel')}</button><button aria-label="Profile">${ic('avatar')}</button><button aria-label="Menu">${ic('dots')}</button></div>`);

define('bookmark-item',`:host{display:block;flex:none}a{display:flex;align-items:center;gap:13px}`,
el=>`<a href="#"${el.textContent?'':' aria-label="Bookmark"'}>${ic(el.getAttribute('icon'))}${el.textContent?'<slot></slot>':''}</a>`);
define('bookmarks-bar',`
:host{display:flex;align-items:center;height:70px;padding:0 30px 10px 26px;color:#fff;font-size:24px;line-height:32px;border-bottom:2px solid #5b62b5}
.list{display:flex;align-items:center;flex:1;gap:40px}
bookmark-item[wide]{margin-right:13px}
.end{display:flex;align-items:center;gap:32px}
.end i{width:4px;height:32px;border-radius:2px;background:#1b1a4e}`,
`<div class="list">${[['globeL',''],['ms','Downloads - Visua...'],['globeL',''],['globeL','Colorlib | Free Boo...'],['univ','About Us - Univ M...'],['slark','Slark - Free Fashio...'],['angular','Stock Management'],['resume','(1) Resume Editor'],['seal','Online Application...']].map(([i,t])=>`<bookmark-item icon="${i}">${t}</bookmark-item>`).join('')}</div>
<div class="end"><button aria-label="More bookmarks">${ic('more')}</button><i></i><bookmark-item icon="folder">All Bookmarks</bookmark-item></div>`);

/* shop page */
define('shop-nav',`
:host{display:block;flex:none;background:#fff;box-shadow:0 4px 20px rgba(0,0,0,.28);position:relative}
.c{max-width:2280px;margin:0 auto;display:flex;height:128px;font-size:30px;color:#333}
.cat{width:525px;margin-right:60px;background:#e89a40;color:#fff;font-weight:700;font-size:40px;justify-content:flex-start;gap:30px;padding-left:50px}
ul{display:flex;gap:10px}
li{position:relative}
a{display:flex;align-items:center;gap:12px;height:128px;padding:0 30px}
.on a{background:#e89a40;color:#fff}
.new{position:absolute;left:42px;top:4px;width:78px;height:36px;background:#e89a40;color:#fff;font-size:18px;line-height:36px;text-align:center}
.new::after{content:"";position:absolute;left:8px;top:36px;border:8px solid transparent;border-top-color:#e89a40;border-bottom:0}`,
`<div class="c"><button class="cat">${ic('burger')}<span>CATEGORIES</span></button>
<ul><li><a href="#">Home</a></li><li class="on"><a href="#">Product</a></li><li><a href="#">Service</a></li><li><a href="#">Shop${ic('chev')}</a><span class="new">NEW</span></li><li><a href="#">Pages</a></li><li><a href="#">Blog${ic('chev')}</a></li><li><a href="#">Contact Us</a></li></ul></div>`);
define('shop-pagination',`
:host{display:block;flex:none;max-width:2280px;width:100%;margin:0 auto;padding:136px 0 71px 674px;font-size:28px;line-height:35px}
ul{display:flex;justify-content:center}
li{border:2px solid #dee2e6;margin-left:-2px;padding:16px 24px;color:#444;position:relative}
li:first-child{border-radius:8px 0 0 8px;color:#6c757d}li:last-child{border-radius:0 8px 8px 0}
.on{background:#333;color:#fff;border-color:#c6918d;z-index:1}`,
`<ul><li><a href="#">«</a></li><li class="on"><a href="#">1</a></li><li><a href="#">2</a></li><li><a href="#">»</a></li></ul>`);
define('broken-image',`:host{display:flex;height:32px;color:#444;font-size:28px;line-height:46px}`,`${ic('broken')}<span>#</span>`);
define('footer-links',`:host{display:block;padding:0 30px;white-space:nowrap}
h4{margin:0 0 56px;font-size:34px;line-height:40px;font-weight:700}
::slotted(a){display:block;line-height:64px;color:#fff;text-decoration:none}`,el=>`<h4>${el.getAttribute('heading')}</h4><slot></slot>`);
define('hand-mark',`:host{position:absolute;left:850px;top:140px;pointer-events:none}svg{display:block}`,
`<svg width="830" height="560" viewBox="1150 838 830 560" fill="none" stroke="#b04c1c" stroke-width="2"><path d="M1157 922V1110C1157 1150 1163 1170 1167 1201C1172 1240 1182 1262 1188 1281C1192 1300 1190 1315 1193 1340C1196 1370 1200 1380 1211 1380H1345C1376 1380 1390 1368 1414 1364C1470 1360 1520 1355 1579 1355H1705C1740 1356 1770 1357 1798 1358H1942C1952 1358 1958 1340 1960 1325C1963 1300 1964 1290 1964 1266V1194C1963 1160 1957 1140 1957 1106L1956 910C1956 885 1962 880 1966 866C1966 856 1940 850 1908 850H1842C1800 850 1790 856 1760 864C1738 869 1715 872 1694 876C1620 893 1550 910 1491 917C1460 921 1430 924 1403 924H1320C1305 924 1290 904 1272 896C1262 889 1254 885 1244 885H1195C1184 885 1180 888 1179 896L1179 918C1179 930 1172 940 1165 951"/></svg>`);
define('shop-footer',`
:host{display:flex;flex-direction:column;flex:1;background:#222;color:#fff;font-size:28px;line-height:48px;position:relative}
.c{width:100%;max-width:2280px;margin:0 auto;position:relative}
.top{flex:1;border-bottom:2px solid #555;padding-top:200px}
.g{display:grid;grid-template-columns:5fr 2fr 2fr 3fr;margin:0 -30px}
.about{padding:4px 30px 0}
p{margin:57px 0 30px;max-width:815px}
.tel{color:#ec9b40;font-size:40px;font-weight:700}
.addr{padding:0 30px}
h4{margin:0 0 60px;font-size:34px;line-height:40px;font-weight:700}
.addr li{line-height:56px}
.soc{display:flex;gap:57px;margin-top:39px}
.bot{display:flex;justify-content:space-between;padding:41px 0 42px}
.bot a{text-decoration:underline;text-underline-offset:4px;text-decoration-thickness:2px}
.bot broken-image{margin-top:3px}
.up{position:absolute;right:20px;bottom:19px;width:80px;height:80px;background:#202020;box-shadow:0 0 26px rgba(0,0,0,.1)}`,
`<div class="c top"><div class="g"><div class="about"><broken-image></broken-image><p>Praesent dapibus, neque id cursus ucibus, tortor neque egestas augue, magna eros eu erat. Aliquam erat volutpat. Nam dui mi, tincidunt quis, accumsan porttitor, facilisis luctus, metus.</p><div>Got Question? Call us 24/7</div><a class="tel" href="#">+0123 456 789</a></div>
<footer-links heading="Information"><a href="#">About Us</a><a href="#">Faq</a><a href="#">Terms &amp; Conditions</a><a href="#">Contact Us</a><a href="#">Help</a></footer-links>
<footer-links heading="Customer Service"><a href="#">Payment Methods</a><a href="#">Money-back</a><a href="#">Returns</a><a href="#">Shipping</a><a href="#">Privacy Policy</a></footer-links>
<div class="addr"><h4>Get In Tuch</h4><ul><li>NO. 342 - London Oxford Street.</li><li>012 United Kingdom.</li><li>info@eshop.com</li><li>+032 3456 7890</li></ul><div class="soc"><a href="#" aria-label="Facebook">${ic('fb')}</a><a href="#" aria-label="Twitter">${ic('tw')}</a><a href="#" aria-label="Flickr">${ic('flickr')}</a><a href="#" aria-label="Instagram">${ic('insta')}</a></div></div></div><hand-mark></hand-mark></div>
<div class="c bot"><span>Copyright © 2020 <a href="#">Wpthemesgrid</a> - All Rights Reserved.</span><broken-image></broken-image></div>
<button class="up" aria-label="Back to top">${ic('up')}</button>`);
define('shop-page',`:host{display:flex;flex-direction:column;flex:1;background:#fff;font-family:"Liberation Sans",Arial,sans-serif}`,`<shop-nav></shop-nav><shop-pagination></shop-pagination><shop-footer></shop-footer>`);

define('browser-window',`
:host{display:flex;flex-direction:column;flex:1;margin-top:4px;min-height:0;background:#1b1a4e;border-radius:20px;overflow:hidden;position:relative;z-index:2;box-shadow:0 -2px 0 #9a9cb4,0 2px 1px #6e6e6e,0 6px 30px rgba(0,0,0,.35)}
.bar{background:#353e9f;border-radius:16px 16px 0 0;flex:none}`,
`<browser-tabstrip></browser-tabstrip><div class="bar"><browser-toolbar></browser-toolbar><bookmarks-bar></bookmarks-bar></div><shop-page></shop-page>`);

/* presentation window peeking out below */
define('slides-statusbar',`
:host{display:flex;align-items:center;flex:none;height:52px;margin-top:-21px;padding:0 48px 0 49px;position:relative;z-index:1;border-radius:0 0 22px 22px;border-bottom:4px solid #7d7d7d;background:linear-gradient(90deg,#a2a2a2,#8d8d8d 20%,#868686 55%,#989898 65%,#9a9a9a);color:#3b3b3b;font-size:24px;line-height:32px;white-space:nowrap}
.s{flex:1;display:flex;gap:44px;align-items:center}
.p{display:flex;align-items:center;gap:8px}
.v{width:74px;height:48px;background:#757575;display:flex;justify-content:center;align-items:center;margin:0 -22px}
input{appearance:none;-webkit-appearance:none;width:200px;height:9px;margin:0 -28px;border-radius:5px;background:#6b6b6b}
input::-webkit-slider-thumb{-webkit-appearance:none;width:32px;height:32px;border-radius:50%;background:#b3b3b3;border:0}
.z{display:flex;gap:42px;align-items:center}
.z button{font-size:34px;width:18px;height:30px}
.z .out{margin-left:-8px}`,
`<div class="s"><span>Slide 1 of 11</span><span>English (United States)</span><span class="p">${ic('acci')}Accessibility: Investigate</span></div>
<div class="z"><span class="p">${ic('notesi')}Notes</span><span class="p">${ic('comi')}Comments</span><span class="v">${ic('v1')}</span>${ic('v2')}${ic('v3')}${ic('v4')}<button class="out" aria-label="Zoom out">−</button><input type="range" aria-label="Zoom" min="0" max="100" value="35"><button aria-label="Zoom in">+</button><span>71%</span>${ic('fit')}</div>`);

define('dock-app',`:host{display:flex;justify-content:center;align-items:center;width:72px;height:72px;position:relative;flex:none}
ui-icon{filter:drop-shadow(0 2px 2px rgba(0,0,0,.3))}
:host([running])::after{content:"";position:absolute;left:32px;top:83px;width:8px;height:8px;border-radius:50%;background:#263038}
.b{position:absolute;top:-10px;right:-10px;min-width:34px;height:34px;border-radius:17px;background:#e7564a;color:#fff;font-size:18px;line-height:34px;text-align:center;padding:0 4px}`,
el=>{const n=el.getAttribute('icon'),b=el.getAttribute('badge');return ic(n)+(b?`<span class="b">${b}</span>`:'')});
define('mac-dock',`
:host{display:flex;gap:22px;align-self:center;align-items:flex-start;flex:none;height:112px;margin:10px 0;padding:15px 14px 0;border:2px solid rgba(215,222,230,.55);border-radius:34px;position:relative;background:linear-gradient(90deg,#9ba2a8,#a4abb2 12%,#acabb2 24%,#9ca1aa 38%,#96a3ac 52%,#a7a8b2 60%,#b0afb8 68%,#9ba4b2 78%,#9aa5b2 90%,#93a4b1)}
i{width:20px;height:84px;background:linear-gradient(#6d757e,#6d757e) center/2px 100% no-repeat}`,
`${['finder*','launch','safari','messages*','mail','facetime','maps','photos','notes*','calc*','chrome*','vscode*','settings*','gear','|','terminal*','anydesk*','db*','rstudio*','excel*','appstore*','preview*','word*','play*','whatsapp*','ppt*','music*','|','stack','trash'].map(n=>n=='|'?'<i></i>':`<dock-app icon="${n.replace('*','')}"${n.includes('*')?' running':''}${n=='messages*'?' badge="1,874"':n=='settings*'?' badge="1"':''}></dock-app>`).join('')}`);

define('mac-wallpaper',`:host{position:absolute;left:0;right:0;bottom:0;height:180px}svg{display:block;width:100%;height:100%}`,
`<svg viewBox="0 0 2880 180" preserveAspectRatio="none"><defs><linearGradient id="a"><stop offset="0" stop-color="#66727d"/><stop offset=".3" stop-color="#56677a"/><stop offset=".6" stop-color="#59687c"/><stop offset="1" stop-color="#6f8798"/></linearGradient></defs>
<rect width="2880" height="180" fill="url(#a)"/><rect width="2880" height="70" fill="#22211f"/><path d="M232 0h180v70H232zM620 0h90v70H620zM1160 0h130v70h-130z" fill="#4a4843"/><path d="M1290 0h50v70h-50z" fill="#4a2424"/><path d="M1345 0h520v70h-520z" fill="#39434a"/><path d="M2000 0h140v70h-140z" fill="#4d4843"/><path d="M2340 0h280v70h-280z" fill="#101118"/><path d="M2620 0h260v108l-260-12z" fill="#6b6d68"/><path d="M2700 110l180 8v62H2700z" fill="#6f8798"/><path d="M2700 108l180 10" stroke="#4d6172" stroke-width="3"/>
<path d="M0 0h110v104H0z" fill="#25252c"/><path d="M50 66l40-4-14 43H50z" fill="#a08c48"/><path d="M60 50h50l-10 25z" fill="#5a2a2e"/><path d="M0 108l90-10v82H0z" fill="#7f8c9a"/><path d="M0 168h2880v12H0z" fill="#4a5d70"/>
<path d="M16 168v-30h34v30M16 150h34M58 150h12l-12 18h14M76 140v28" fill="none" stroke="#2c3136" stroke-width="3"/></svg>`);

define('mac-desktop',`:host{display:flex;flex-direction:column;height:100vh;position:relative;overflow:hidden;background:#3a4140}
.w{position:absolute;left:2px;bottom:42px;font:italic 700 26px/30px "Liberation Serif",serif;color:#2c3136}`,
`<mac-wallpaper></mac-wallpaper><span class="w">ineart</span><mac-menubar></mac-menubar><browser-window></browser-window><slides-statusbar></slides-statusbar><mac-dock></mac-dock>`);
</script>
</body>
</html>
